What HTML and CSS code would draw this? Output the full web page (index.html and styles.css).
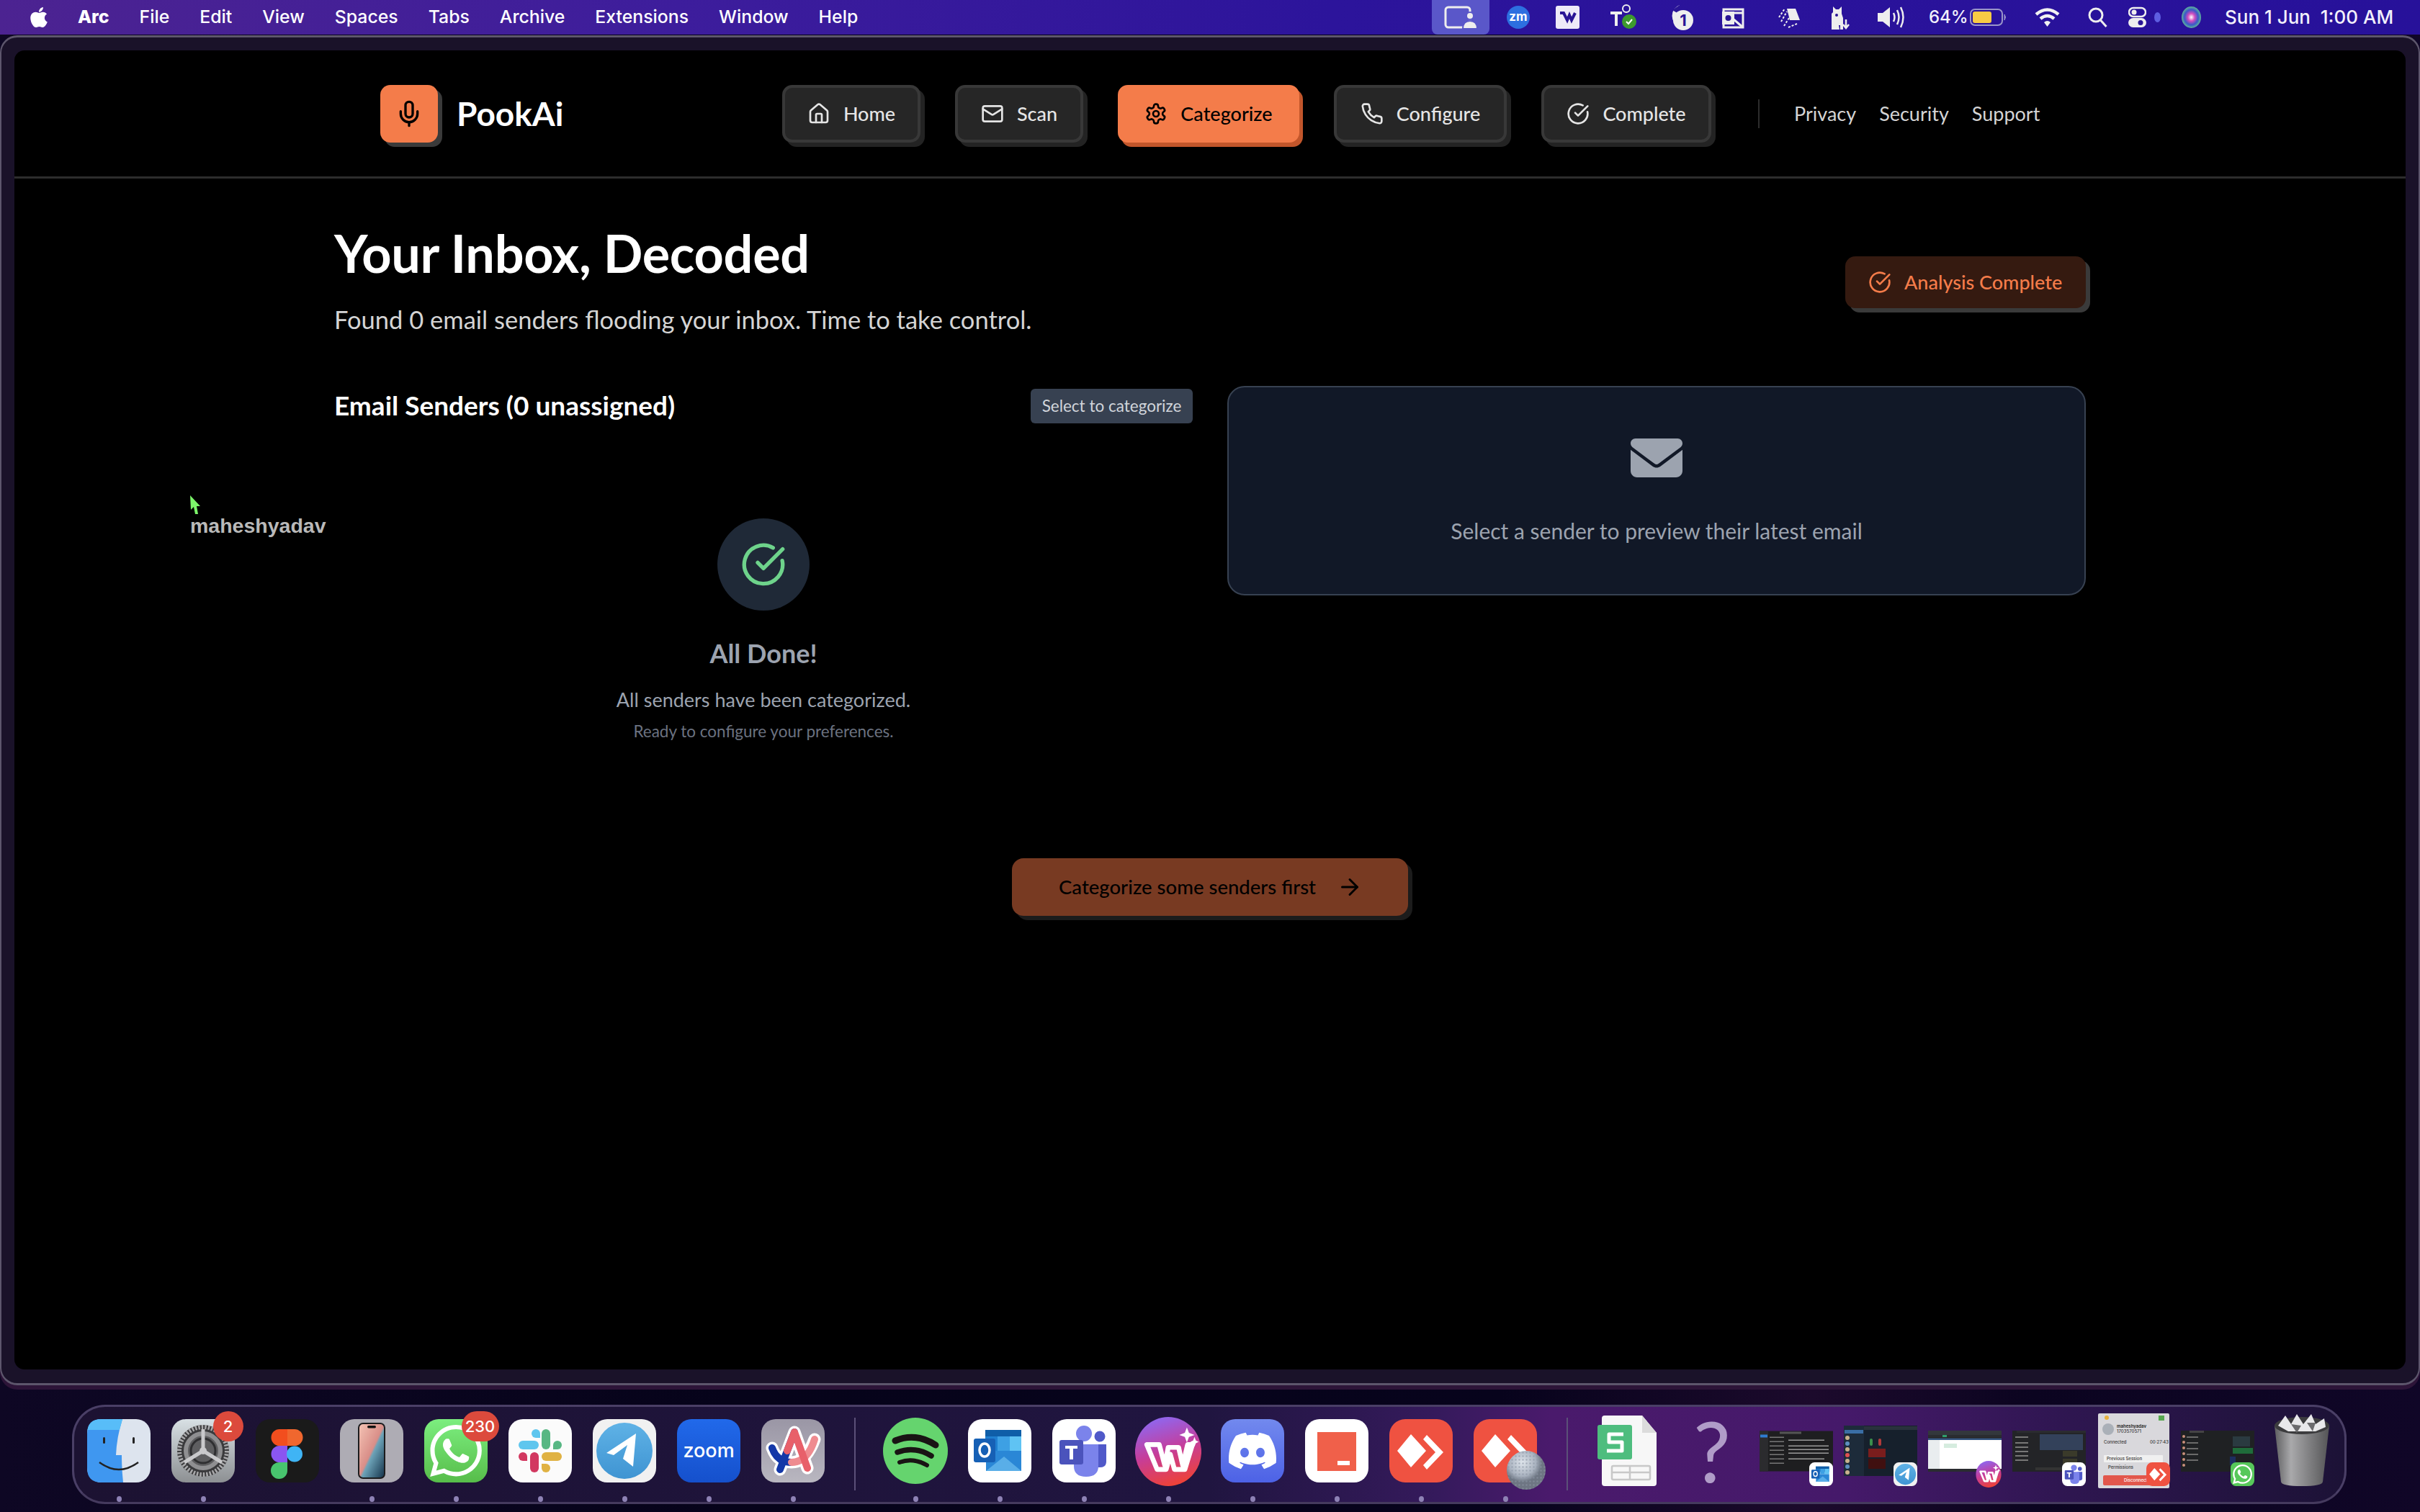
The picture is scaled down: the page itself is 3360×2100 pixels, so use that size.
FILE: index.html
```html
<!DOCTYPE html>
<html lang="en">
<head>
<meta charset="utf-8">
<title>PookAi</title>
<link rel="stylesheet" href="styles.css">
</head>
<body>
<svg class="defs" width="0" height="0">
<defs>
<symbol id="i-check" viewBox="0 0 24 24"><path d="M21.801 10A10 10 0 1 1 17 3.335"/><path d="m9 11 3 3L22 4"/></symbol>
<symbol id="i-wa" viewBox="0 0 24 24"><path stroke="none" d="M17.472 14.382c-.297-.149-1.758-.867-2.03-.967-.273-.099-.471-.148-.67.15-.197.297-.767.966-.94 1.164-.173.199-.347.223-.644.075-.297-.15-1.255-.463-2.39-1.475-.883-.788-1.48-1.761-1.653-2.059-.173-.297-.018-.458.13-.606.134-.133.298-.347.446-.52.149-.174.198-.298.298-.497.099-.198.05-.371-.025-.52-.075-.149-.669-1.612-.916-2.207-.242-.579-.487-.5-.669-.51-.173-.008-.371-.01-.57-.01-.198 0-.52.074-.792.372-.272.297-1.04 1.016-1.04 2.479 0 1.462 1.065 2.875 1.213 3.074.149.198 2.096 3.2 5.077 4.487.709.306 1.262.489 1.694.625.712.227 1.36.195 1.871.118.571-.085 1.758-.719 2.006-1.413.248-.694.248-1.289.173-1.413-.074-.124-.272-.198-.57-.347m-5.421 7.403h-.004a9.87 9.87 0 01-5.031-1.378l-.361-.214-3.741.982.998-3.648-.235-.374a9.86 9.86 0 01-1.51-5.26c.001-5.45 4.436-9.884 9.888-9.884 2.64 0 5.122 1.03 6.988 2.898a9.825 9.825 0 012.893 6.994c-.003 5.45-4.437 9.884-9.885 9.884m8.413-18.297A11.815 11.815 0 0012.05 0C5.495 0 .16 5.335.157 11.892c0 2.096.547 4.142 1.588 5.945L.057 24l6.305-1.654a11.882 11.882 0 005.683 1.448h.005c6.554 0 11.89-5.335 11.893-11.893a11.821 11.821 0 00-3.48-8.413z"/></symbol>
<symbol id="i-telegram" viewBox="0 0 88 88"><defs><linearGradient id="tg" x1="0" y1="0" x2="0" y2="1"><stop offset="0" stop-color="#5fb2e6"/><stop offset="1" stop-color="#3f94d2"/></linearGradient></defs><rect width="88" height="88" rx="20" fill="#f1f1f1"/><circle cx="44" cy="44" r="39" fill="url(#tg)"/><path d="M19 47 60 20 56 66 42 55 48 36 29 50z" fill="#fff"/></symbol>
<symbol id="i-outlook" viewBox="0 0 88 88"><rect width="88" height="88" rx="20" fill="#fff"/><rect x="24" y="15" width="50" height="20" fill="#0f5ea8"/><rect x="24" y="24" width="17" height="20" fill="#1f7fd0"/><rect x="41" y="24" width="17" height="20" fill="#3da0e4"/><rect x="58" y="24" width="16" height="20" fill="#5fc3f3"/><path d="M25 44h49v28H25z" fill="#2a87d6"/><path d="M25 72 50 52l24 20z" fill="#59aee8"/><rect x="8" y="27" width="30" height="33" rx="3" fill="#1660b5"/><ellipse cx="23" cy="43" rx="7" ry="9" fill="none" stroke="#fff" stroke-width="3.5"/></symbol>
<symbol id="i-teams" viewBox="0 0 88 88"><rect width="88" height="88" rx="20" fill="#fff"/><circle cx="44" cy="20" r="11" fill="#7b83eb"/><circle cx="66" cy="24" r="7.5" fill="#5059c9"/><path d="M58 35h17v24q0 8-9 8h-8z" fill="#5059c9"/><path d="M30 35h34v30q0 15-17 15T30 65z" fill="#7b83eb"/><rect x="10" y="29" width="33" height="34" rx="3" fill="#4b53bc"/><path d="M18 37h17v4h-6v15h-5V41h-6z" fill="#fff"/></symbol>
<symbol id="i-wps" viewBox="0 0 96 100"><defs><linearGradient id="wp" x1="0.3" y1="0" x2="0.6" y2="1"><stop offset="0" stop-color="#8d68f2"/><stop offset=".5" stop-color="#c63d9a"/><stop offset="1" stop-color="#ef4234"/></linearGradient></defs><ellipse cx="48" cy="50" rx="48" ry="50" fill="url(#wp)"/><path d="M17 40h18l8 30 5-26h15l6 26 7-30h7L72 76H57l-6-22-6 22H32z" fill="none" stroke="#fff" stroke-width="7" stroke-linejoin="round"/><path d="M75 15l3 8 8 3-8 3-3 8-3-8-8-3 8-3zM86 29l2 5 4 2-4 2-2 5-2-5-4-2 4-2z" fill="#fff"/></symbol>
<symbol id="i-any" viewBox="0 0 88 88"><rect width="88" height="88" rx="22" fill="#ef5241"/><path d="M30 21 51 44 30 67 11 44z" fill="#fff"/><path d="M52 22 75 46 52 70 47 64 64 46 47 28z" fill="#fff"/></symbol>
</defs>
</svg>

<div class="desktop">
  <header class="menubar">
    <div class="menu-left">
      <svg class="apple" viewBox="0 0 384 512"><path d="M318.7 268.7c-.2-36.7 16.4-64.4 50-84.8-18.8-26.9-47.2-41.7-84.7-44.6-35.5-2.8-74.3 20.7-88.5 20.7-15 0-49.4-19.7-76.4-19.7C63.3 141.2 4 184.8 4 273.5q0 39.3 14.4 81.2c12.8 36.7 59 126.7 107.2 125.2 25.2-.6 43-17.9 75.8-17.9 31.8 0 48.3 17.9 76.4 17.9 48.6-.7 90.4-82.5 102.6-119.3-65.2-30.7-61.7-90-61.7-91.9zm-56.6-164.2c27.3-32.4 24.8-61.9 24-72.5-24.1 1.4-52 16.4-67.9 34.9-17.5 19.8-27.8 44.3-25.6 71.9 26.1 2 49.9-11.4 69.5-34.3z"/></svg>
      <span class="menu-item menu-app">Arc</span>
      <span class="menu-item">File</span>
      <span class="menu-item">Edit</span>
      <span class="menu-item">View</span>
      <span class="menu-item">Spaces</span>
      <span class="menu-item">Tabs</span>
      <span class="menu-item">Archive</span>
      <span class="menu-item">Extensions</span>
      <span class="menu-item">Window</span>
      <span class="menu-item">Help</span>
    </div>
    <div class="extras">
      <span class="extra-active"><svg width="46" height="34" viewBox="0 0 46 34" fill="none" stroke="#eee" stroke-width="3"><rect x="2" y="3" width="34" height="28" rx="4"/><circle cx="36" cy="15" r="5" fill="#eee" stroke="#5a57c9" stroke-width="2"/><path d="M26 33c0-8 5-11 10-11s10 3 10 11z" fill="#eee" stroke="#5a57c9" stroke-width="2"/></svg></span>
      <svg width="32" height="32" viewBox="0 0 32 32"><circle cx="16" cy="16" r="16" fill="#2d6fe0"/><text x="16" y="21" class="t-zm">zm</text></svg>
      <svg width="33" height="32" viewBox="0 0 33 32"><rect width="33" height="32" rx="3" fill="#eeeaf8"/><path d="M6 10h5l5 10 3-7 3 7 5-10" fill="none" stroke="#2a1595" stroke-width="4"/></svg>
      <svg width="38" height="36" viewBox="0 0 38 36"><circle cx="24" cy="6" r="5" fill="none" stroke="#eee" stroke-width="2"/><path d="M2 10h16v4h-6v16H8V14H2z" fill="#eee"/><circle cx="28" cy="24" r="10" fill="#3d9a2e"/><path d="m24 24 3 3 5-6" fill="none" stroke="#fff" stroke-width="2"/></svg>
      <svg width="40" height="38" viewBox="0 0 40 38"><path d="M20 2a16 16 0 0 0 0 30z" fill="#eee"/><path d="M20 2 10 9l10 6z" fill="#2a1595"/><circle cx="25" cy="23" r="14" fill="#eee"/><text x="25" y="31" class="t-one">1</text></svg>
      <svg width="31" height="32" viewBox="0 0 31 32"><path d="M2 5h27v25H2z" fill="none" stroke="#eee" stroke-width="3"/><path d="M0 8h17v18H0z" fill="#eee"/><circle cx="8.500" cy="17" r="4" fill="#2a1595"/><path d="M15 18 29 30M17 10h12" stroke="#eee" stroke-width="3"/></svg>
      <svg width="31" height="32" viewBox="0 0 31 32"><path d="M12 4h12l6 16H16z" fill="#eee"/><path d="M1 16l8-12M4 22 12 8M8 28l7-11M14 30l12-5" stroke="#eee" stroke-width="2" stroke-dasharray="3 2"/></svg>
      <svg width="31" height="34" viewBox="0 0 31 34"><path d="M4 34V12l2-2V2l4 4h4l4-4v10l2 6v16h-4v-6h-2l1 6z" fill="#eee"/><circle cx="11" cy="14" r="2" fill="#2a1595"/><path d="M24 20v12m-4-5 4 5 4-5" stroke="#eee" stroke-width="2.500" fill="none"/></svg>
      <svg width="39" height="34" viewBox="0 0 39 34" fill="none" stroke="#eee" stroke-width="2.500"><path d="M2 11h7l10-8v28L9 23H2z" fill="#eee" stroke="none"/><path d="M24 11q3 6 0 12M29 7q5 10 0 20M34 3q7 14 0 28"/></svg>
      <span class="extra-text">64%</span>
      <svg width="51" height="24" viewBox="0 0 51 24"><rect x="1" y="1" width="44" height="22" rx="6" fill="none" stroke="#9a95c9" stroke-width="2"/><rect x="4" y="4" width="26" height="16" rx="3" fill="#f7ca45"/><path d="M48 8q3 4 0 8z" fill="#9a95c9" stroke="#9a95c9"/></svg>
      <svg width="35" height="28" viewBox="0 0 35 28" fill="none" stroke="#f2f2f2" stroke-width="4.500"><path d="M2 10q15.500-13 31 0M8 16q9.500-8 19 0"/><path d="M13 21q4.500-4 9 0l-4.500 6z" fill="#f2f2f2" stroke="none"/></svg>
      <svg width="27" height="28" viewBox="0 0 27 28" fill="none" stroke="#eee" stroke-width="3"><circle cx="11" cy="11" r="9"/><path d="m17.500 18 8 9"/></svg>
      <svg width="25" height="30" viewBox="0 0 25 30"><rect x="1" y="2" width="23" height="12" rx="6" fill="none" stroke="#eee" stroke-width="2.500"/><circle cx="8" cy="8" r="3.500" fill="#eee"/><rect y="16" width="25" height="13" rx="6.500" fill="#eee"/><circle cx="17" cy="22.500" r="3.500" fill="#2a1595"/></svg>
      <svg width="9" height="18" viewBox="0 0 9 18"><ellipse cx="4.500" cy="9" rx="4.500" ry="7" fill="#5e5ee0"/></svg>
      <svg width="27" height="30" viewBox="0 0 27 30"><defs><radialGradient id="siri"><stop offset="0" stop-color="#fff"/><stop offset=".35" stop-color="#d34dbe"/><stop offset=".7" stop-color="#3a58c9"/><stop offset="1" stop-color="#5fb59a"/></radialGradient></defs><ellipse cx="13.500" cy="15" rx="13.500" ry="15" fill="url(#siri)"/></svg>
      <span class="extra-text extra-clock">Sun 1 Jun&nbsp; 1:00 AM</span>
    </div>
  </header>

  <div class="window">
    <main class="page">
      <nav class="topnav">
        <div class="brand">
          <span class="brand-tile">
            <svg class="lu lu-mic" viewBox="0 0 24 24"><path d="M12 2a3 3 0 0 0-3 3v7a3 3 0 0 0 6 0V5a3 3 0 0 0-3-3Z"/><path d="M19 10v2a7 7 0 0 1-14 0v-2"/><path d="M12 19v3"/></svg>
          </span>
          <span class="brand-name">PookAi</span>
        </div>
        <div class="nav-buttons">
          <a class="btn"><svg class="lu" viewBox="0 0 24 24"><path d="M15 21v-8a1 1 0 0 0-1-1h-4a1 1 0 0 0-1 1v8"/><path d="M3 10a2 2 0 0 1 .709-1.528l7-5.999a2 2 0 0 1 2.582 0l7 5.999A2 2 0 0 1 21 10v9a2 2 0 0 1-2 2H5a2 2 0 0 1-2-2z"/></svg><span class="btn-label">Home</span></a>
          <a class="btn"><svg class="lu" viewBox="0 0 24 24"><rect x="2" y="4" width="20" height="16" rx="2"/><path d="m22 7-8.970 5.700a1.940 1.940 0 0 1-2.060 0L2 7"/></svg><span class="btn-label">Scan</span></a>
          <a class="btn btn-on"><svg class="lu" viewBox="0 0 24 24"><path d="M12.220 2h-.44a2 2 0 0 0-2 2v.18a2 2 0 0 1-1 1.730l-.43.25a2 2 0 0 1-2 0l-.15-.08a2 2 0 0 0-2.730.73l-.22.38a2 2 0 0 0 .73 2.730l.15.1a2 2 0 0 1 1 1.720v.51a2 2 0 0 1-1 1.740l-.15.09a2 2 0 0 0-.73 2.730l.22.38a2 2 0 0 0 2.730.73l.15-.08a2 2 0 0 1 2 0l.43.25a2 2 0 0 1 1 1.730V20a2 2 0 0 0 2 2h.44a2 2 0 0 0 2-2v-.18a2 2 0 0 1 1-1.730l.43-.25a2 2 0 0 1 2 0l.15.08a2 2 0 0 0 2.730-.73l.22-.39a2 2 0 0 0-.73-2.730l-.15-.08a2 2 0 0 1-1-1.740v-.5a2 2 0 0 1 1-1.740l.15-.09a2 2 0 0 0 .73-2.730l-.22-.38a2 2 0 0 0-2.730-.73l-.15.08a2 2 0 0 1-2 0l-.43-.25a2 2 0 0 1-1-1.730V4a2 2 0 0 0-2-2z"/><circle cx="12" cy="12" r="3"/></svg><span class="btn-label">Categorize</span></a>
          <a class="btn"><svg class="lu" viewBox="0 0 24 24"><path d="M22 16.920v3a2 2 0 0 1-2.180 2 19.790 19.790 0 0 1-8.630-3.070 19.500 19.500 0 0 1-6-6 19.790 19.790 0 0 1-3.070-8.670A2 2 0 0 1 4.110 2h3a2 2 0 0 1 2 1.720 12.840 12.840 0 0 0 .7 2.810 2 2 0 0 1-.45 2.110L8.090 9.910a16 16 0 0 0 6 6l1.270-1.270a2 2 0 0 1 2.110-.45 12.840 12.840 0 0 0 2.810.7A2 2 0 0 1 22 16.920z"/></svg><span class="btn-label">Configure</span></a>
          <a class="btn"><svg class="lu" viewBox="0 0 24 24"><use href="#i-check"/></svg><span class="btn-label">Complete</span></a>
        </div>
        <div class="nav-links">
          <a class="nav-link">Privacy</a>
          <a class="nav-link">Security</a>
          <a class="nav-link">Support</a>
        </div>
      </nav>

      <section class="content">
        <div class="hero">
          <div class="hero-text">
            <h1>Your Inbox, Decoded</h1>
            <p class="lede">Found 0 email senders flooding your inbox. Time to take control.</p>
          </div>
          <div class="status"><svg class="lu" viewBox="0 0 24 24"><use href="#i-check"/></svg><span class="btn-label">Analysis Complete</span></div>
        </div>

        <div class="columns">
          <div class="senders">
            <div class="senders-head">
              <h2>Email Senders (0 unassigned)</h2>
              <span class="pill">Select to categorize</span>
            </div>
            <div class="done">
              <span class="done-circle"><svg class="lu lu-big" viewBox="0 0 24 24"><use href="#i-check"/></svg></span>
              <h3>All Done!</h3>
              <p class="done-one">All senders have been categorized.</p>
              <p class="done-two">Ready to configure your preferences.</p>
            </div>
          </div>
          <aside class="preview">
            <svg class="envelope" viewBox="0 64 512 384"><path d="M48 64C21.500 64 0 85.500 0 112c0 15.100 7.100 29.300 19.200 38.400L236.800 313.600c11.400 8.500 27 8.500 38.400 0L492.800 150.400c12.100-9.100 19.200-23.300 19.200-38.400c0-26.500-21.500-48-48-48H48zM0 176V384c0 35.300 28.700 64 64 64H448c35.300 0 64-28.700 64-64V176L294.400 339.200c-22.800 17.100-54 17.100-76.800 0L0 176z"/></svg>
            <p>Select a sender to preview their latest email</p>
          </aside>
        </div>

        <div class="cta-row">
          <a class="cta"><span class="btn-label">Categorize some senders first</span><svg class="lu lu-arrow" viewBox="0 0 24 24"><path d="M5 12h14"/><path d="m12 5 7 7-7 7"/></svg></a>
        </div>
      </section>

      <div class="remote-cursor">
        <svg width="15" height="26" viewBox="0 0 15 26"><path d="M0 0 14 15 9 15 11 26 7 26 5 16 1 20z" fill="#7cf56a"/></svg>
        <span>maheshyadav</span>
      </div>
    </main>
  </div>

  <footer class="dock-wrap">
    <div class="dock">
      <div class="slot on"><svg class="ico" viewBox="0 0 88 88"><rect width="88" height="88" rx="20" fill="#dde4ee"/><path d="M20 0h29q-8 25-9 50h8q0 20 2 38H20Q0 88 0 68V20Q0 0 20 0z" fill="#3f97f0"/><path d="M20 0h29l-4 15H0V20Q0 0 20 0z" fill="#58bdf8"/><rect x="22" y="25" width="3" height="9" rx="1.500" fill="#222"/><rect x="63" y="25" width="3" height="9" rx="1.500" fill="#222"/><path d="M17 60q27 20 54 0" fill="none" stroke="#222" stroke-width="2.500"/></svg></div>
      <div class="slot on"><svg class="ico" viewBox="0 0 88 88"><defs><linearGradient id="sg" x1="0" y1="0" x2="0" y2="1"><stop offset="0" stop-color="#d8e0e4"/><stop offset="1" stop-color="#8d9093"/></linearGradient></defs><rect width="88" height="88" rx="20" fill="url(#sg)"/><circle cx="44" cy="44" r="36" fill="#3a3a3c"/><circle cx="44" cy="44" r="33" fill="none" stroke="#a9a9ab" stroke-width="6" stroke-dasharray="2.500 2"/><circle cx="44" cy="44" r="24" fill="#5e5e60" stroke="#8f8f91" stroke-width="6"/><circle cx="44" cy="44" r="17" fill="none" stroke="#2f2f31" stroke-width="3"/><path d="M44 44V14M44 44 18 60M44 44 70 60" stroke="#c9c9cb" stroke-width="5"/><circle cx="44" cy="44" r="5" fill="#c9c9cb"/></svg><span class="badge badge-s">2</span></div>
      <div class="slot"><svg class="ico" viewBox="0 0 88 88"><rect width="88" height="88" rx="20" fill="#1a1a1a"/><path d="M44 14H33a11.500 11.500 0 0 0 0 23h11z" fill="#f24e1e"/><path d="M44 14h10a11.500 11.500 0 0 1 0 23H44z" fill="#f0672e"/><path d="M44 37H33a11.500 11.500 0 0 0 0 23h11z" fill="#8a56f0"/><circle cx="54" cy="48.500" r="11" fill="#3fb4f5"/><path d="M33 60h11v11.500a11.500 11.500 0 1 1-11-11.500z" fill="#48c46e"/></svg></div>
      <div class="slot on"><svg class="ico" viewBox="0 0 88 88"><defs><linearGradient id="ph" x1="0" y1="0" x2="1" y2="1"><stop offset="0" stop-color="#f4c4b5"/><stop offset=".5" stop-color="#d98e88"/><stop offset=".55" stop-color="#6da3b8"/><stop offset="1" stop-color="#123048"/></linearGradient></defs><rect width="88" height="88" rx="20" fill="#aeacb4"/><rect x="26" y="6" width="36" height="76" rx="6" fill="url(#ph)" stroke="#1c1c1e" stroke-width="2"/><rect x="38" y="9" width="12" height="3.500" rx="1.700" fill="#111"/></svg></div>
      <div class="slot on"><svg class="ico ico-wa" viewBox="0 0 88 88"><defs><linearGradient id="wg" x1="0" y1="0" x2="0" y2="1"><stop offset="0" stop-color="#7cee7f"/><stop offset="1" stop-color="#57bd4a"/></linearGradient></defs><rect width="88" height="88" rx="20" fill="url(#wg)"/><use href="#i-wa" x="8" y="8" width="72" height="72" fill="#fff"/></svg><span class="badge badge-l">230</span></div>
      <div class="slot on"><svg class="ico" viewBox="0 0 88 88"><rect width="88" height="88" rx="20" fill="#fbfbfb"/><path d="M36 14a6 6 0 0 0-6 6 6 6 0 0 0 6 6h6v-6a6 6 0 0 0-6-6z" fill="#5fc6ee" transform="translate(2 0)"/><rect x="14" y="30" width="28" height="12" rx="6" fill="#5fc6ee"/><rect x="46" y="14" width="12" height="28" rx="6" fill="#57b783"/><path d="M62 36a6 6 0 0 1 12 0 6 6 0 0 1-6 6h-6z" fill="#57b783"/><rect x="46" y="46" width="28" height="12" rx="6" fill="#e0b243"/><path d="M46 62h6a6 6 0 1 1-6 6z" fill="#e0b243"/><rect x="30" y="46" width="12" height="28" rx="6" fill="#d23860"/><path d="M14 52a6 6 0 0 1 12 0v6h-6a6 6 0 0 1-6-6z" fill="#d23860"/></svg></div>
      <div class="slot on"><svg class="ico" viewBox="0 0 88 88"><use href="#i-telegram"/></svg></div>
      <div class="slot on"><span class="zoom-tile">zoom</span></div>
      <div class="slot on"><svg class="ico" viewBox="0 0 88 88"><defs><linearGradient id="ar" x1="0" y1="0" x2="0" y2="1"><stop offset="0" stop-color="#9a96a5"/><stop offset="1" stop-color="#b9b7c0"/></linearGradient></defs><rect width="88" height="88" rx="20" fill="url(#ar)"/><path d="M15 40Q22 60 42 60T74 28" fill="none" stroke="#fff" stroke-width="17" stroke-linecap="round"/><path d="M26 70 46 18l18 50" fill="none" stroke="#fff" stroke-width="17" stroke-linecap="round" stroke-linejoin="round"/><path d="M15 40Q22 60 42 60" fill="none" stroke="#1438a8" stroke-width="10" stroke-linecap="round"/><path d="M42 60Q64 60 74 28" fill="none" stroke="#ef8b90" stroke-width="10" stroke-linecap="round"/><path d="M26 70 46 18" fill="none" stroke="#1438a8" stroke-width="10" stroke-linecap="round"/><path d="M36 44 46 18l18 50" fill="none" stroke="#e8606a" stroke-width="10" stroke-linecap="round" stroke-linejoin="round"/></svg></div>
      <span class="dock-sep"></span>
      <div class="slot on"><svg class="ico ico-tall" viewBox="0 0 90 92"><ellipse cx="45" cy="46" rx="45" ry="46" fill="#65d46e"/><g fill="none" stroke="#191414" stroke-linecap="round"><path d="M17 32q28-12 56 6" stroke-width="9"/><path d="M20 48q24-9 47 5" stroke-width="7.500"/><path d="M23 62q19-7 38 4" stroke-width="6"/></g></svg></div>
      <div class="slot on"><svg class="ico" viewBox="0 0 88 88"><use href="#i-outlook"/></svg></div>
      <div class="slot on"><svg class="ico" viewBox="0 0 88 88"><use href="#i-teams"/></svg></div>
      <div class="slot on"><svg class="ico ico-wps" viewBox="0 0 96 100"><use href="#i-wps"/></svg></div>
      <div class="slot on"><svg class="ico" viewBox="0 0 88 88"><defs><linearGradient id="dc" x1="0" y1="0" x2="0" y2="1"><stop offset="0" stop-color="#7289ee"/><stop offset="1" stop-color="#4d62e6"/></linearGradient></defs><rect width="88" height="88" rx="20" fill="url(#dc)"/><g transform="translate(11 11) scale(2.750)"><path fill="#fff" d="M20.317 4.370a19.791 19.791 0 0 0-4.885-1.515.074.074 0 0 0-.079.037c-.21.375-.444.864-.608 1.250a18.270 18.270 0 0 0-5.487 0 12.640 12.640 0 0 0-.617-1.250.077.077 0 0 0-.079-.037A19.736 19.736 0 0 0 3.677 4.370a.07.07 0 0 0-.032.027C.533 9.046-.32 13.580.099 18.057a.082.082 0 0 0 .031.057 19.900 19.900 0 0 0 5.993 3.030.078.078 0 0 0 .084-.028 14.090 14.090 0 0 0 1.226-1.994.076.076 0 0 0-.041-.106 13.107 13.107 0 0 1-1.872-.892.077.077 0 0 1-.008-.128 10.200 10.200 0 0 0 .372-.292.074.074 0 0 1 .077-.01c3.928 1.793 8.180 1.793 12.062 0a.074.074 0 0 1 .078.01c.12.098.246.198.373.292a.077.077 0 0 1-.006.127 12.299 12.299 0 0 1-1.873.892.077.077 0 0 0-.041.107c.36.698.772 1.362 1.225 1.993a.076.076 0 0 0 .084.028 19.839 19.839 0 0 0 6.002-3.030.077.077 0 0 0 .032-.054c.5-5.177-.838-9.674-3.549-13.660a.061.061 0 0 0-.031-.03zM8.020 15.330c-1.183 0-2.157-1.085-2.157-2.419 0-1.333.956-2.419 2.157-2.419 1.210 0 2.176 1.096 2.157 2.420 0 1.333-.956 2.418-2.157 2.418zm7.975 0c-1.183 0-2.157-1.085-2.157-2.419 0-1.333.955-2.419 2.157-2.419 1.210 0 2.176 1.096 2.157 2.420 0 1.333-.946 2.418-2.157 2.418z"/></g></svg></div>
      <div class="slot on"><svg class="ico" viewBox="0 0 88 88"><rect width="88" height="88" rx="20" fill="#fff"/><rect x="17" y="18" width="54" height="54" fill="#f0604a"/><rect x="45" y="58" width="17" height="6" fill="#fff"/></svg></div>
      <div class="slot on"><svg class="ico" viewBox="0 0 88 88"><use href="#i-any"/></svg></div>
      <div class="slot on"><svg class="ico" viewBox="0 0 88 88"><use href="#i-any"/></svg>
        <svg class="golf" viewBox="0 0 54 54"><defs><radialGradient id="gb" cx=".4" cy=".3"><stop offset="0" stop-color="#dfe5ec"/><stop offset=".7" stop-color="#a9b2bf"/><stop offset="1" stop-color="#6e7683"/></radialGradient><pattern id="gd" width="5" height="5" patternUnits="userSpaceOnUse"><circle cx="2.500" cy="2.500" r="1.200" fill="#8b94a3" opacity=".6"/></pattern></defs><circle cx="27" cy="27" r="27" fill="url(#gb)"/><circle cx="27" cy="27" r="27" fill="url(#gd)"/></svg>
      </div>
      <span class="dock-sep"></span>
      <div class="slot"><svg class="ico ico-doc" viewBox="0 0 84 98"><path d="M10 0h52l20 24v70q0 4-4 4H10q-4 0-4-4V4q0-4 4-4z" fill="#f7f7f7"/><path d="M62 0l20 24H62z" fill="#dcdcdc"/><rect x="0" y="13" width="48" height="48" rx="3" fill="#4ebd7e"/><path d="M36 26H16v11h18v12H13" fill="none" stroke="#fff" stroke-width="5" stroke-linejoin="round"/><g fill="none" stroke="#c8c8c8" stroke-width="2.500"><rect x="20" y="70" width="53" height="19" rx="2"/><path d="M20 79h53M45 70v19"/></g></svg></div>
      <div class="slot"><span class="unknown">?</span></div>
      <div class="slot"><svg class="thumb" viewBox="0 0 102 56"><rect width="102" height="56" fill="#1e1e20"/><rect width="12" height="56" fill="#2b2b2e"/><rect x="28" y="1" width="30" height="3" fill="#555"/><rect x="1" y="5" width="10" height="4" fill="#2f7bd0"/><g fill="#777"><rect x="14" y="8" width="20" height="1.500"/><rect x="14" y="14" width="20" height="1.500"/><rect x="14" y="20" width="20" height="1.500"/><rect x="14" y="26" width="20" height="1.500"/><rect x="14" y="32" width="20" height="1.500"/><rect x="14" y="38" width="20" height="1.500"/><rect x="14" y="44" width="20" height="1.500"/></g><g fill="#999"><rect x="40" y="12" width="50" height="1.500"/><rect x="40" y="20" width="56" height="1.500"/><rect x="40" y="25" width="56" height="1.500"/><rect x="40" y="30" width="56" height="1.500"/><rect x="40" y="38" width="50" height="1.500"/></g></svg><svg class="mini" viewBox="0 0 88 88"><use href="#i-outlook"/></svg></div>
      <div class="slot"><svg class="thumb thumb-tall" viewBox="0 0 102 70"><rect width="102" height="70" fill="#16202c"/><rect width="28" height="70" fill="#1d2b3a"/><rect x="1" y="6" width="26" height="5" fill="#3a6ea5"/><g fill="#c9b28d"><circle cx="5" cy="17" r="3"/><circle cx="5" cy="25" r="3" fill="#5d90c0"/><circle cx="5" cy="33" r="3"/><circle cx="5" cy="41" r="3" fill="#e05050"/><circle cx="5" cy="49" r="3"/><circle cx="5" cy="57" r="3" fill="#5d90c0"/><circle cx="5" cy="65" r="3"/></g><rect x="28" y="1" width="74" height="5" fill="#29323c"/><rect x="36" y="18" width="4" height="10" rx="2" fill="#3a8f4c"/><rect x="48" y="18" width="4" height="10" rx="2" fill="#b23a3a"/><rect x="34" y="32" width="24" height="12" fill="#7a1d1d"/><rect x="34" y="46" width="24" height="14" fill="#401010"/></svg><svg class="mini" viewBox="0 0 88 88"><use href="#i-telegram"/></svg></div>
      <div class="slot"><svg class="thumb" viewBox="0 0 102 57"><rect width="102" height="57" fill="#2a2c30"/><rect y="0" width="102" height="6" fill="#33373c"/><rect x="20" y="6" width="6" height="3" fill="#2f9e6c"/><rect y="11" width="102" height="1.500" fill="#3968a8"/><rect y="13" width="102" height="40" fill="#fff"/><rect width="16" height="40" y="13" fill="#e9edef"/><rect x="22" y="18" width="18" height="6" fill="#d6ecdf"/></svg><svg class="mini mini-wps" viewBox="0 0 96 100"><use href="#i-wps"/></svg></div>
      <div class="slot"><svg class="thumb" viewBox="0 0 102 57"><rect width="102" height="57" fill="#232427"/><rect x="6" y="0" width="96" height="3" fill="#2b2c30"/><g fill="#777"><rect x="4" y="8" width="18" height="2"/><rect x="4" y="16" width="18" height="2"/><rect x="4" y="22" width="18" height="2"/><rect x="4" y="28" width="18" height="2"/><rect x="4" y="34" width="18" height="2"/><rect x="4" y="40" width="18" height="2"/></g><rect x="38" y="5" width="60" height="22" fill="#33415a"/><rect x="70" y="28" width="20" height="8" fill="#3a3a2a"/><rect x="70" y="39" width="20" height="8" fill="#3a3a2a"/><rect x="32" y="51" width="56" height="4" fill="#333"/></svg><svg class="mini" viewBox="0 0 88 88"><use href="#i-teams"/></svg></div>
      <div class="slot"><svg class="thumb thumb-app" viewBox="0 0 99 104"><rect width="99" height="104" rx="2" fill="#d9d8dc"/><circle cx="12" cy="6" r="3" fill="#e8b23f"/><rect x="84" y="3" width="8" height="7" fill="#57a84f"/><circle cx="14" cy="22" r="8" fill="#aab0b8"/><text x="26" y="20" class="t-app t-bold">maheshyadav</text><text x="26" y="27" class="t-app">1703570571</text><text x="8" y="42" class="t-app">Connected</text><text x="72" y="42" class="t-app">00:27:43</text><rect x="8" y="58" width="82" height="10" rx="1" fill="#f0f0f0"/><text x="12" y="65" class="t-app">Previous Session</text><text x="14" y="77" class="t-app">Permissions</text><rect x="7" y="86" width="86" height="14" rx="2" fill="#e2574c"/><text x="36" y="95" class="t-app t-white">Disconnect</text></svg><svg class="mini" viewBox="0 0 88 88"><use href="#i-any"/></svg></div>
      <div class="slot"><svg class="thumb" viewBox="0 0 102 57"><rect width="102" height="57" fill="#1f2123"/><rect x="12" y="0" width="20" height="3" fill="#444"/><g fill="#c98f7a"><circle cx="4" cy="8" r="2"/><circle cx="4" cy="16" r="2"/><circle cx="4" cy="24" r="2"/><circle cx="4" cy="32" r="2"/><circle cx="4" cy="40" r="2"/><circle cx="4" cy="48" r="2"/></g><g fill="#6a6a6a"><rect x="8" y="8" width="16" height="2"/><rect x="8" y="16" width="16" height="2"/><rect x="8" y="24" width="16" height="2"/><rect x="8" y="32" width="16" height="2"/><rect x="8" y="40" width="16" height="2"/></g><rect x="72" y="8" width="24" height="14" fill="#2a3a40"/><rect x="72" y="24" width="28" height="8" fill="#1f6c3a"/><rect x="68" y="36" width="8" height="12" fill="#1d2e60"/></svg><svg class="mini" viewBox="0 0 88 88"><rect width="88" height="88" rx="20" fill="#57c85a"/><use href="#i-wa" x="8" y="8" width="72" height="72" fill="#fff"/></svg></div>
      <div class="slot"><svg class="ico ico-trash" viewBox="0 0 78 102"><defs><linearGradient id="tr" x1="0" y1="0" x2="1" y2="0"><stop offset="0" stop-color="#5e5e60"/><stop offset=".3" stop-color="#a9a9ab"/><stop offset=".55" stop-color="#8a8a8c"/><stop offset="1" stop-color="#545456"/></linearGradient></defs><path d="M1 18 10 96q1 6 29 6t29-6l9-78z" fill="url(#tr)"/><ellipse cx="39" cy="18" rx="38" ry="12" fill="#3c3c3e"/><path d="M6 18 16 4l8 12 8-14 9 14L52 2l6 14 12-8 2 12-14 6H20z" fill="#e8e8ea"/><path d="M24 16l8 12 6-10zM46 14l8 12 4-12z" fill="#6b6b6d"/></svg></div>
    </div>
  </footer>
</div>
</body>
</html>
```

FILE: styles.css
```css
* { box-sizing: border-box; }
html, body { margin: 0; padding: 0; }
body {
  width: 3360px;
  height: 2100px;
  overflow: hidden;
  background: #000;
  font-family: "Lato", "Liberation Sans", sans-serif;
}
.defs { position: absolute; }

.desktop {
  width: 3360px;
  height: 2100px;
  display: flex;
  flex-direction: column;
  background: linear-gradient(90deg, #0e0724 0, #06031a 30%, #07031c 62%, #1c0a2c 75%, #0b0420 84%, #100627 100%);
}

/* Menu bar */
.menubar {
  flex: 0 0 48px;
  height: 48px;
  display: flex;
  justify-content: space-between;
  align-items: center;
  background: linear-gradient(90deg, #4c2391 0, #3d1d9c 28%, #2c149b 55%, #27119a 100%);
  color: #fff;
  font-family: "Inter", "Liberation Sans", sans-serif;
  font-size: 24.8px;
}
.menu-left { display: flex; align-items: center; gap: 42px; padding-left: 40px; }
.apple { width: 28px; height: 32px; fill: #fff; margin-right: -2px; }
.menu-item { font-weight: 500; white-space: nowrap; padding-bottom: 2px; }
.menu-app { font-weight: 800; }
.extras {
  display: grid;
  grid-template-columns: 104px 68px 74px 78px 79px 78px 70px 66px 73px 57px 90px 74px 56px 36px 38px 60px 234px;
  align-items: center;
  justify-items: start;
  padding-right: 37px;
  height: 48px;
}
.extra-active {
  width: 80px;
  height: 48px;
  background: #5a57c9;
  border-radius: 0 0 8px 8px;
  display: flex;
  align-items: center;
  justify-content: center;
}
.extra-text { font-size: 24px; font-weight: 500; color: #f2f0fb; white-space: nowrap; padding-bottom: 2px; }
.extra-clock { font-size: 26px; }
.t-zm { font: 700 17px "Inter", sans-serif; fill: #fff; text-anchor: middle; }
.t-one { font: 700 22px "Inter", sans-serif; fill: #2a1595; text-anchor: middle; }

/* Window */
.window {
  flex: 0 0 1875px;
  margin: 1px 0 0;
  padding: 18px 18px 19px;
  background: #1a1229;
  border: solid #5d566c;
  border-width: 3px 2px 3px;
  border-radius: 24px;
  box-shadow: 0 6px 0 #2d1438;
}
.page {
  position: relative;
  height: 100%;
  background: #000;
  border-radius: 14px;
  color: #fff;
}

/* Top navigation */
.topnav {
  height: 178px;
  border-bottom: 3px solid #2d2d2d;
  display: flex;
  align-items: flex-start;
  padding-top: 48px;
  padding-left: 508px;
}
.brand { display: flex; align-items: center; gap: 26px; width: 558px; }
.brand-tile {
  width: 80px;
  height: 80px;
  border-radius: 14px;
  background: #f47c4a;
  box-shadow: 6px 6px 0 #3a3a3a;
  display: flex;
  align-items: center;
  justify-content: center;
}
.lu {
  width: 32px;
  height: 32px;
  fill: none;
  stroke: currentColor;
  stroke-width: 2;
  stroke-linecap: round;
  stroke-linejoin: round;
  flex: none;
}
.lu-mic { width: 40px; height: 40px; stroke: #000; }
.brand-name { font-size: 46px; font-weight: 700; color: #fff; white-space: nowrap; padding-bottom: 2px; }

.nav-buttons {
  display: grid;
  grid-template-columns: 192px 178px 252px 240px 236px;
  gap: 48px;
}
.btn {
  height: 80px;
  display: flex;
  align-items: center;
  justify-content: center;
  gap: 18px;
  background: #262626;
  border: 4px solid #383838;
  border-radius: 14px;
  box-shadow: 6px 6px 0 #232323;
  font-size: 27px;
  font-weight: 500;
  color: #e5e5e5;
  white-space: nowrap;
}
.btn-label { padding-bottom: 2px; }
.btn-on {
  background: #f47c4a;
  border-color: #f47c4a;
  box-shadow: 5px 6px 0 #c2562b;
  color: #000;
}
.nav-links {
  display: flex;
  align-items: center;
  gap: 32px;
  height: 40px;
  margin-top: 20px;
  margin-left: 65px;
  padding-left: 48px;
  border-left: 2px solid #2d2d2d;
}
.nav-link { font-size: 27px; color: #d4d4d4; white-space: nowrap; padding-bottom: 2px; }

/* Content */
.content { padding: 0 444px 0 444px; }
.hero { display: flex; justify-content: space-between; align-items: flex-start; padding-top: 61px; }
h1 { margin: 0; font-size: 72px; line-height: 84px; font-weight: 700; letter-spacing: -0.3px; white-space: nowrap; }
.lede { margin: 27px 0 0; font-size: 34.5px; line-height: 48px; color: #d4d4d4; white-space: nowrap; }
.status {
  display: flex;
  align-items: center;
  gap: 18px;
  height: 72px;
  width: 334px;
  margin-top: 47px;
  padding: 0 0 0 32px;
  background: #351a10;
  border-radius: 14px;
  box-shadow: 6px 6px 0 #3a3a3a;
  font-size: 27px;
  font-weight: 500;
  color: #f47c4a;
  white-space: nowrap;
}

.columns { display: flex; gap: 48px; margin-top: 68px; }
.senders { flex: 0 0 1192px; }
.senders-head { display: flex; justify-content: space-between; align-items: center; height: 48px; margin-top: 4px; }
h2 { margin: 0; font-size: 37px; font-weight: 700; color: #fff; white-space: nowrap; padding-bottom: 3px; }
.pill {
  display: flex;
  align-items: center;
  justify-content: center;
  width: 225px;
  height: 48px;
  padding-bottom: 2px;
  border-radius: 6px;
  background: #374151;
  color: #d1d5db;
  font-size: 22.5px;
  white-space: nowrap;
}
.done { display: flex; flex-direction: column; align-items: center; padding-top: 132px; }
.done-circle {
  width: 128px;
  height: 128px;
  border-radius: 50%;
  background: #1f2937;
  display: flex;
  align-items: center;
  justify-content: center;
}
.lu-big { width: 64px; height: 64px; color: #6ed38b; }
h3 { margin: 35px 0 0; font-size: 36px; line-height: 48px; font-weight: 700; color: #9ca3af; }
.done-one { margin: 21px 0 0; font-size: 27px; line-height: 40px; color: #9ca3af; }
.done-two { margin: 6px 0 0; font-size: 22.5px; line-height: 36px; color: #6b7280; }

.preview {
  flex: 0 0 1192px;
  height: 291px;
  display: flex;
  flex-direction: column;
  align-items: center;
  background: #111827;
  border: 2px solid #374151;
  border-radius: 24px;
  padding-top: 71px;
  color: #9ca3af;
}
.envelope { width: 72px; height: 54px; fill: #9ca3af; }
.preview p { margin: 52px 0 0; font-size: 30px; line-height: 44px; color: #9ca3af; white-space: nowrap; }

.cta-row { display: flex; justify-content: center; margin-top: 158px; }
.cta {
  display: flex;
  align-items: center;
  gap: 29px;
  width: 550px;
  height: 80px;
  padding-left: 65px;
  background: #783a22;
  border-radius: 16px;
  box-shadow: 6px 6px 0 #1c1c1c;
  color: #000;
  font-size: 27.5px;
  font-weight: 500;
  white-space: nowrap;
}
.lu-arrow { width: 36px; height: 36px; }

.remote-cursor {
  position: absolute;
  left: 244px;
  top: 618px;
  display: flex;
  flex-direction: column;
  gap: 0;
  font: 700 28.5px "Liberation Sans", sans-serif;
  color: #b9b9b9;
}

/* Dock */
.dock-wrap { flex: 1; padding: 27px 0 0 100px; }
.dock {
  width: 3158px;
  height: 138px;
  display: flex;
  align-items: stretch;
  padding-left: 3.5px;
  background: linear-gradient(90deg, #1c1232 0, #201540 50%, #351a5c 60%, #4a1a6c 65%, #45196a 78%, #2e1650 88%, #1c1236 100%);
  border: 3px solid #4a3f66;
  border-bottom-color: #453a5e;
  border-radius: 46px;
}
.slot {
  position: relative;
  flex: 0 0 117px;
  display: flex;
  align-items: flex-start;
  justify-content: center;
  padding-top: 17px;
}
.slot.on::after {
  content: "";
  position: absolute;
  left: 55px;
  bottom: 0;
  width: 7px;
  height: 8px;
  border-radius: 50%;
  background: #8e82b5;
}
.dock-sep { flex: 0 0 53px; position: relative; }
.dock-sep::before {
  content: "";
  position: absolute;
  left: 26px;
  top: 15px;
  bottom: 16px;
  width: 2px;
  background: #5b5078;
}
.ico { width: 88px; height: 88px; flex: none; display: block; }
.ico-tall { width: 90px; height: 92px; margin-top: -2px; }
.ico-wps { width: 96px; height: 96px; margin-top: -3px; }
.ico-doc { width: 84px; height: 98px; margin-top: -5px; }
.ico-trash { width: 78px; height: 102px; margin-top: -9px; }
.zoom-tile {
  width: 88px;
  height: 88px;
  border-radius: 20px;
  background: linear-gradient(180deg, #2169ea, #1550cc);
  color: #fff;
  font: 500 27px/88px "Inter", sans-serif;
  text-align: center;
}
.unknown { font: 400 116px/88px "Lato", sans-serif; color: #b09cc8; }
.thumb { width: 102px; height: 57px; margin-top: 16px; display: block; }
.thumb-tall { height: 70px; margin-top: 9px; }
.thumb-app { width: 99px; height: 104px; margin-top: -8px; }
.mini { position: absolute; right: 8px; top: 77px; width: 33px; height: 33px; }
.mini-wps { width: 36px; height: 37px; top: 75px; }
.golf { position: absolute; left: 60px; top: 61px; width: 54px; height: 54px; }
.badge {
  position: absolute;
  top: 6px;
  height: 42px;
  border-radius: 21px;
  background: #dc4a3c;
  color: #fff;
  font: 500 22px/42px "Inter", sans-serif;
  text-align: center;
}
.badge-s { left: 72px; width: 42px; }
.badge-l { left: 66px; width: 52px; }
.t-app { font: 500 6px "Inter", sans-serif; fill: #333; }
.t-bold { font-weight: 700; }
.t-white { fill: #fff; }
```
